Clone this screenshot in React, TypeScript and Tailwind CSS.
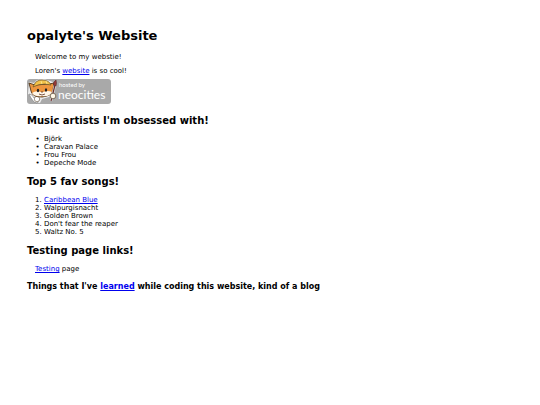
import type { ReactNode } from 'react';

function Link({ children }: { children: ReactNode }) {
  return <a href="#" className="text-[#0000ee] underline">{children}</a>;
}

function NeocitiesBadge() {
  return (
    <svg viewBox="0 0 84 25" role="img" aria-label="Hosted by Neocities" className="h-[25px] w-[84px]">
      <rect width="84" height="25" rx="3" fill="#a9a9a9" />
      {/* white sticker edge */}
      <path d="M2 3 L7 4 L10 1 L17 0 L26 3 L28 9 L27 14 L22 18 L15 20 L13 24 L8 23 L5 18 L1 15Z" fill="#eee" />
      {/* pliers and left paw */}
      <path d="M2 15 L5 16 L7 19 L10 17 L13 20 L10 24 L7 23 L4 19Z" fill="#fff" stroke="#777" strokeWidth=".6" />
      <circle cx="10" cy="20" r="2.7" fill="#fff" stroke="#665744" strokeWidth=".6" />
      {/* head */}
      <path d="M4 12 L2 4 L8 6 L22 5 L27 4 L26 11 Q25 17 15 18 Q5 18 4 12Z" fill="#ed963f" stroke="#4d341c" strokeWidth=".9" />
      <path d="M5 14 Q9 11 14 13 L16 13 Q21 11 25 13 Q23 18 15 17 Q8 18 5 14Z" fill="#fff6e7" />
      <path d="M7 6 Q9 1 15 1 Q22 1 24 6 L18 5 Q11 5 6 8Z" fill="#f3c34a" stroke="#695022" strokeWidth=".7" />
      <path d="M14 2 L15 5 M19 2 L20 5" stroke="#fff1a6" strokeWidth=".7" />
      <ellipse cx="11" cy="11.5" rx="1.2" ry="1.7" fill="#222" />
      <ellipse cx="19" cy="11" rx="1.2" ry="1.7" fill="#222" />
      <path d="M12 15 Q15 17 18 15 M14 13 L16 13" fill="none" stroke="#5b3022" strokeWidth=".8" />
      {/* brush and right paw */}
      <path d="M24 22 L28 6" stroke="#ddd" strokeWidth="2.4" />
      <path d="M24 22 L28 6" stroke="#672b2b" strokeWidth="1.2" />
      <path d="M26.5 6 Q26 3 29 1 Q30 4 29 7Z" fill="#983b3b" stroke="#4e2525" strokeWidth=".5" />
      <circle cx="26" cy="17" r="2.8" fill="#fff8e8" stroke="#665744" strokeWidth=".8" />
      <text x="32" y="8" fill="#fff" fontSize="6" className="font-['Lato',sans-serif]">hosted by</text>
      <text x="31" y="20" fill="#fff" fontSize="12" className="font-['Lato',sans-serif]">neocities</text>
    </svg>
  );
}

const artists = ['Björk', 'Caravan Palace', 'Frou Frou', 'Depeche Mode'];
const songs = ['Walpurgisnacht', 'Golden Brown', "Don't fear the reaper", 'Waltz No. 5'];

export default function App() {
  return (
    <main className="min-h-screen bg-white px-[27px] pt-[27px] font-['DejaVu_Sans',Verdana,sans-serif] text-[7px] leading-[8px] text-black">
      <h1 className="text-[13px] leading-[17px] font-bold">opalyte's Website</h1>
      <p className="mt-[9px] pl-2">Welcome to my webstie!</p>
      <p className="mt-[6px] pl-2">Loren's <Link>website</Link> is so cool!</p>
      <a href="#" className="mt-[4px] block w-fit"><NeocitiesBadge /></a>
      <h2 className="mt-[10px] text-[10px] leading-[13px] font-bold">Music artists I'm obsessed with!</h2>
      <ul className="mt-2 list-['•__'] pl-[17px]">
        {artists.map((artist) => <li key={artist}>{artist}</li>)}
      </ul>
      <h2 className="mt-2 text-[10px] leading-[13px] font-bold">Top 5 fav songs!</h2>
      <ol className="mt-2 list-decimal pl-[17px]">
        <li><Link>Caribbean Blue</Link></li>
        {songs.map((song) => <li key={song}>{song}</li>)}
      </ol>
      <h2 className="mt-2 text-[10px] leading-[13px] font-bold">Testing page links!</h2>
      <p className="mt-2 pl-2"><Link>Testing</Link> page</p>
      <h3 className="mt-[9px] text-[8px] leading-[10px] font-bold">
        Things that I've <Link>learned</Link> while coding this website, kind of a blog
      </h3>
    </main>
  );
}
